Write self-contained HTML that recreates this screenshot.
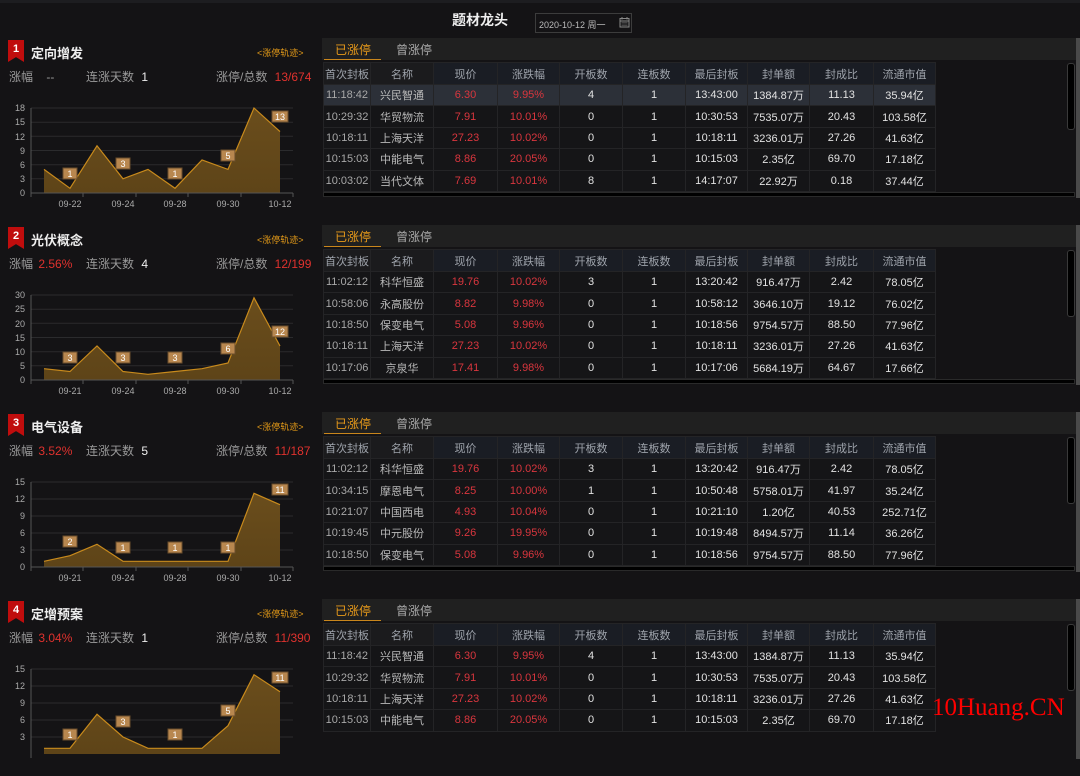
<!DOCTYPE html>
<html><head><meta charset="utf-8"><style>
*{margin:0;padding:0;box-sizing:border-box}
body{width:1080px;height:730px;overflow:hidden;background:#141315;font-family:"Liberation Sans","Noto Sans CJK SC",sans-serif;position:relative;color:#ddd}
.abs{position:absolute}
.sec{position:absolute;left:0;width:1080px;height:187px}
.badge{position:absolute;left:8px;top:40px;width:16px;height:22px;background:#c00d0d;clip-path:polygon(0 0,100% 0,100% 100%,50% 78%,0 100%);color:#fff;font-size:11px;font-weight:bold;text-align:center;line-height:19px}
.ttl{position:absolute;left:31px;top:43px;font-size:13px;color:#eee;font-weight:bold}
.trk{position:absolute;left:257px;top:46px;font-size:9px;color:#e39a18}
.st{position:absolute;top:68px;font-size:12px;color:#9a9a9a;white-space:nowrap}
.red{color:#e0322e}.wh{color:#eee}
.tabbar{position:absolute;left:322px;top:38px;width:754px;height:22px;background:#202020}
.tab1{position:absolute;left:335px;top:41px;font-size:12px;color:#e89a1a}
.tab2{position:absolute;left:396px;top:41px;font-size:12px;color:#aaa}
.uline{position:absolute;left:324px;top:59px;width:57px;height:1px;background:#c9861c}
table{position:absolute;left:323px;top:62px;border-collapse:collapse;font-size:11px;table-layout:fixed}
td{border:1px solid #242426;text-align:center;height:21.4px;padding:0;white-space:nowrap;color:#e2e2e2;background:#151517}
tr.h td{height:22px;background:#1a1d24;color:#9ea3ab}
tr.h td.a{background:#1b1b1d}
td.t{color:#a8a8a8}td.n{color:#b9b9b9}td.r{color:#d9363e}
tr.hl td{background:#2c3038}
.hs{position:absolute;left:323px;top:192px;width:752px;height:5px;background:#000;border:1px solid #2a2a2a}
.vs{position:absolute;left:1067px;top:63px;width:8px;height:67px;background:#000;border:1px solid #3a3a3a;border-radius:3px}
.edge{position:absolute;left:1076px;top:38px;width:4px;height:160px;background:#4a4a4a}
svg.ch{position:absolute;left:0;top:0;overflow:visible}
</style></head><body>
<div class="abs" style="left:0;top:0;width:1080px;height:3px;background:#1d1d20"></div>
<div class="abs" style="left:452px;top:10px;font-size:14px;font-weight:bold;color:#eee">题材龙头</div>
<div class="abs" style="left:535px;top:13px;width:97px;height:20px;border:1px solid #3c3c3c;font-size:9px;color:#bbb;padding:4px 0 0 3px">2020-10-12 周一
<svg class="abs" style="left:83px;top:3px" width="11" height="11" viewBox="0 0 11 11"><rect x="1" y="1.5" width="9" height="8.5" fill="none" stroke="#888"/><line x1="1" y1="4" x2="10" y2="4" stroke="#888"/><line x1="3" y1="0" x2="3" y2="2.5" stroke="#888"/><line x1="8" y1="0" x2="8" y2="2.5" stroke="#888"/><path d="M2.5 5.5h6M2.5 7h6M2.5 8.5h6" stroke="#777" stroke-width=".6"/></svg></div>

<!-- SECTION 1 -->
<div class="sec" style="top:0">
<div class="badge">1</div><div class="ttl">定向增发</div><div class="trk">&lt;涨停轨迹&gt;</div>
<div class="st" style="left:9px">涨幅 <span style="margin-left:10px">--</span></div>
<div class="st" style="left:86px">连涨天数 <span class="wh" style="margin-left:4px">1</span></div>
<div class="st" style="left:216px">涨停/总数 <span class="red" style="margin-left:4px">13/674</span></div>
<svg class="ch" width="320" height="215">
<defs><linearGradient id="g" x1="0" y1="0" x2="0" y2="1"><stop offset="0" stop-color="#6a4d1c"/><stop offset="1" stop-color="#5e4418"/></linearGradient></defs>
<g stroke="#2b2b2d"><line x1="31" y1="108" x2="293" y2="108"/><line x1="31" y1="122.2" x2="293" y2="122.2"/><line x1="31" y1="136.3" x2="293" y2="136.3"/><line x1="31" y1="150.5" x2="293" y2="150.5"/><line x1="31" y1="164.7" x2="293" y2="164.7"/><line x1="31" y1="178.8" x2="293" y2="178.8"/></g>
<polygon fill="url(#g)" points="44,193 44,169.4 70,188.3 97,145.8 123,178.8 148,169.4 175,188.3 202,159.9 228,169.4 254,108 280,131.6 280,193"/>
<polyline fill="none" stroke="#c88a1c" stroke-width="1.2" points="44,169.4 70,188.3 97,145.8 123,178.8 148,169.4 175,188.3 202,159.9 228,169.4 254,108 280,131.6"/>
<g stroke="#555"><line x1="31" y1="193" x2="293" y2="193"/><line x1="31" y1="108" x2="31" y2="197"/><line x1="83" y1="193" x2="83" y2="197"/><line x1="136" y1="193" x2="136" y2="197"/><line x1="188" y1="193" x2="188" y2="197"/><line x1="241" y1="193" x2="241" y2="197"/><line x1="293" y1="193" x2="293" y2="197"/></g>
<g font-size="9" fill="#aaa" text-anchor="end"><text x="25" y="196">0</text><text x="25" y="182">3</text><text x="25" y="168">6</text><text x="25" y="154">9</text><text x="25" y="140">12</text><text x="25" y="125">15</text><text x="25" y="111">18</text></g>
<g font-size="9" fill="#aaa" text-anchor="middle"><text x="70" y="207">09-22</text><text x="123" y="207">09-24</text><text x="175" y="207">09-28</text><text x="228" y="207">09-30</text><text x="280" y="207">10-12</text></g>
<g fill="#b8874f" stroke="#6a4e2c"><rect x="63" y="168" width="14" height="11"/><rect x="116" y="158" width="14" height="11"/><rect x="168" y="168" width="14" height="11"/><rect x="221" y="150" width="14" height="11"/><rect x="272" y="111" width="16" height="11"/></g>
<g font-size="9" fill="#fff" text-anchor="middle"><text x="70" y="177">1</text><text x="123" y="167">3</text><text x="175" y="177">1</text><text x="228" y="159">5</text><text x="280" y="120">13</text></g>
</svg>
<div class="tabbar"></div><div class="tab1">已涨停</div><div class="tab2">曾涨停</div><div class="uline"></div>
<table><colgroup><col style="width:47px"><col style="width:63px"><col style="width:64px"><col style="width:62px"><col style="width:63px"><col style="width:63px"><col style="width:62px"><col style="width:62px"><col style="width:64px"><col style="width:62px"></colgroup>
<tr class="h"><td class="a">首次封板</td><td class="a">名称</td><td>现价</td><td>涨跌幅</td><td>开板数</td><td>连板数</td><td>最后封板</td><td>封单额</td><td>封成比</td><td>流通市值</td></tr>
<tr class="hl"><td class="t">11:18:42</td><td class="n">兴民智通</td><td class="r">6.30</td><td class="r">9.95%</td><td>4</td><td>1</td><td>13:43:00</td><td>1384.87万</td><td>11.13</td><td>35.94亿</td></tr>
<tr><td class="t">10:29:32</td><td class="n">华贸物流</td><td class="r">7.91</td><td class="r">10.01%</td><td>0</td><td>1</td><td>10:30:53</td><td>7535.07万</td><td>20.43</td><td>103.58亿</td></tr>
<tr><td class="t">10:18:11</td><td class="n">上海天洋</td><td class="r">27.23</td><td class="r">10.02%</td><td>0</td><td>1</td><td>10:18:11</td><td>3236.01万</td><td>27.26</td><td>41.63亿</td></tr>
<tr><td class="t">10:15:03</td><td class="n">中能电气</td><td class="r">8.86</td><td class="r">20.05%</td><td>0</td><td>1</td><td>10:15:03</td><td>2.35亿</td><td>69.70</td><td>17.18亿</td></tr>
<tr><td class="t">10:03:02</td><td class="n">当代文体</td><td class="r">7.69</td><td class="r">10.01%</td><td>8</td><td>1</td><td>14:17:07</td><td>22.92万</td><td>0.18</td><td>37.44亿</td></tr>
</table>
<div class="hs"></div><div class="vs"></div><div class="edge"></div>
</div>

<!-- SECTION 2 -->
<div class="sec" style="top:187px">
<div class="badge">2</div><div class="ttl">光伏概念</div><div class="trk">&lt;涨停轨迹&gt;</div>
<div class="st" style="left:9px">涨幅 <span class="red" style="margin-left:2px">2.56%</span></div>
<div class="st" style="left:86px">连涨天数 <span class="wh" style="margin-left:4px">4</span></div>
<div class="st" style="left:216px">涨停/总数 <span class="red" style="margin-left:4px">12/199</span></div>
<svg class="ch" width="320" height="215">
<g stroke="#2b2b2d"><line x1="31" y1="108" x2="293" y2="108"/><line x1="31" y1="122.2" x2="293" y2="122.2"/><line x1="31" y1="136.3" x2="293" y2="136.3"/><line x1="31" y1="150.5" x2="293" y2="150.5"/><line x1="31" y1="164.7" x2="293" y2="164.7"/><line x1="31" y1="178.8" x2="293" y2="178.8"/></g>
<polygon fill="url(#g)" points="44,193 44,181.7 70,184.5 97,159 123,184.5 148,187.3 175,184.5 202,181.7 228,176 254,110.8 280,159 280,193"/>
<polyline fill="none" stroke="#c88a1c" stroke-width="1.2" points="44,181.7 70,184.5 97,159 123,184.5 148,187.3 175,184.5 202,181.7 228,176 254,110.8 280,159"/>
<g stroke="#555"><line x1="31" y1="193" x2="293" y2="193"/><line x1="31" y1="108" x2="31" y2="197"/><line x1="83" y1="193" x2="83" y2="197"/><line x1="136" y1="193" x2="136" y2="197"/><line x1="188" y1="193" x2="188" y2="197"/><line x1="241" y1="193" x2="241" y2="197"/><line x1="293" y1="193" x2="293" y2="197"/></g>
<g font-size="9" fill="#aaa" text-anchor="end"><text x="25" y="196">0</text><text x="25" y="182">5</text><text x="25" y="168">10</text><text x="25" y="154">15</text><text x="25" y="140">20</text><text x="25" y="125">25</text><text x="25" y="111">30</text></g>
<g font-size="9" fill="#aaa" text-anchor="middle"><text x="70" y="207">09-21</text><text x="123" y="207">09-24</text><text x="175" y="207">09-28</text><text x="228" y="207">09-30</text><text x="280" y="207">10-12</text></g>
<g fill="#b8874f" stroke="#6a4e2c"><rect x="63" y="165" width="14" height="11"/><rect x="116" y="165" width="14" height="11"/><rect x="168" y="165" width="14" height="11"/><rect x="221" y="156" width="14" height="11"/><rect x="272" y="139" width="16" height="11"/></g>
<g font-size="9" fill="#fff" text-anchor="middle"><text x="70" y="174">3</text><text x="123" y="174">3</text><text x="175" y="174">3</text><text x="228" y="165">6</text><text x="280" y="148">12</text></g>
</svg>
<div class="tabbar"></div><div class="tab1">已涨停</div><div class="tab2">曾涨停</div><div class="uline"></div>
<table><colgroup><col style="width:47px"><col style="width:63px"><col style="width:64px"><col style="width:62px"><col style="width:63px"><col style="width:63px"><col style="width:62px"><col style="width:62px"><col style="width:64px"><col style="width:62px"></colgroup>
<tr class="h"><td class="a">首次封板</td><td class="a">名称</td><td>现价</td><td>涨跌幅</td><td>开板数</td><td>连板数</td><td>最后封板</td><td>封单额</td><td>封成比</td><td>流通市值</td></tr>
<tr><td class="t">11:02:12</td><td class="n">科华恒盛</td><td class="r">19.76</td><td class="r">10.02%</td><td>3</td><td>1</td><td>13:20:42</td><td>916.47万</td><td>2.42</td><td>78.05亿</td></tr>
<tr><td class="t">10:58:06</td><td class="n">永高股份</td><td class="r">8.82</td><td class="r">9.98%</td><td>0</td><td>1</td><td>10:58:12</td><td>3646.10万</td><td>19.12</td><td>76.02亿</td></tr>
<tr><td class="t">10:18:50</td><td class="n">保变电气</td><td class="r">5.08</td><td class="r">9.96%</td><td>0</td><td>1</td><td>10:18:56</td><td>9754.57万</td><td>88.50</td><td>77.96亿</td></tr>
<tr><td class="t">10:18:11</td><td class="n">上海天洋</td><td class="r">27.23</td><td class="r">10.02%</td><td>0</td><td>1</td><td>10:18:11</td><td>3236.01万</td><td>27.26</td><td>41.63亿</td></tr>
<tr><td class="t">10:17:06</td><td class="n">京泉华</td><td class="r">17.41</td><td class="r">9.98%</td><td>0</td><td>1</td><td>10:17:06</td><td>5684.19万</td><td>64.67</td><td>17.66亿</td></tr>
</table>
<div class="hs"></div><div class="vs"></div><div class="edge"></div>
</div>

<!-- SECTION 3 -->
<div class="sec" style="top:374px">
<div class="badge">3</div><div class="ttl">电气设备</div><div class="trk">&lt;涨停轨迹&gt;</div>
<div class="st" style="left:9px">涨幅 <span class="red" style="margin-left:2px">3.52%</span></div>
<div class="st" style="left:86px">连涨天数 <span class="wh" style="margin-left:4px">5</span></div>
<div class="st" style="left:216px">涨停/总数 <span class="red" style="margin-left:4px">11/187</span></div>
<svg class="ch" width="320" height="215">
<g stroke="#2b2b2d"><line x1="31" y1="108" x2="293" y2="108"/><line x1="31" y1="125" x2="293" y2="125"/><line x1="31" y1="142" x2="293" y2="142"/><line x1="31" y1="159" x2="293" y2="159"/><line x1="31" y1="176" x2="293" y2="176"/></g>
<polygon fill="url(#g)" points="44,193 44,187.3 70,181.7 97,170.3 123,187.3 148,187.3 175,187.3 202,187.3 228,187.3 254,119.3 280,130.7 280,193"/>
<polyline fill="none" stroke="#c88a1c" stroke-width="1.2" points="44,187.3 70,181.7 97,170.3 123,187.3 148,187.3 175,187.3 202,187.3 228,187.3 254,119.3 280,130.7"/>
<g stroke="#555"><line x1="31" y1="193" x2="293" y2="193"/><line x1="31" y1="108" x2="31" y2="197"/><line x1="83" y1="193" x2="83" y2="197"/><line x1="136" y1="193" x2="136" y2="197"/><line x1="188" y1="193" x2="188" y2="197"/><line x1="241" y1="193" x2="241" y2="197"/><line x1="293" y1="193" x2="293" y2="197"/></g>
<g font-size="9" fill="#aaa" text-anchor="end"><text x="25" y="196">0</text><text x="25" y="179">3</text><text x="25" y="162">6</text><text x="25" y="145">9</text><text x="25" y="128">12</text><text x="25" y="111">15</text></g>
<g font-size="9" fill="#aaa" text-anchor="middle"><text x="70" y="207">09-21</text><text x="123" y="207">09-24</text><text x="175" y="207">09-28</text><text x="228" y="207">09-30</text><text x="280" y="207">10-12</text></g>
<g fill="#b8874f" stroke="#6a4e2c"><rect x="63" y="162" width="14" height="11"/><rect x="116" y="168" width="14" height="11"/><rect x="168" y="168" width="14" height="11"/><rect x="221" y="168" width="14" height="11"/><rect x="272" y="110" width="16" height="11"/></g>
<g font-size="9" fill="#fff" text-anchor="middle"><text x="70" y="171">2</text><text x="123" y="177">1</text><text x="175" y="177">1</text><text x="228" y="177">1</text><text x="280" y="119">11</text></g>
</svg>
<div class="tabbar"></div><div class="tab1">已涨停</div><div class="tab2">曾涨停</div><div class="uline"></div>
<table><colgroup><col style="width:47px"><col style="width:63px"><col style="width:64px"><col style="width:62px"><col style="width:63px"><col style="width:63px"><col style="width:62px"><col style="width:62px"><col style="width:64px"><col style="width:62px"></colgroup>
<tr class="h"><td class="a">首次封板</td><td class="a">名称</td><td>现价</td><td>涨跌幅</td><td>开板数</td><td>连板数</td><td>最后封板</td><td>封单额</td><td>封成比</td><td>流通市值</td></tr>
<tr><td class="t">11:02:12</td><td class="n">科华恒盛</td><td class="r">19.76</td><td class="r">10.02%</td><td>3</td><td>1</td><td>13:20:42</td><td>916.47万</td><td>2.42</td><td>78.05亿</td></tr>
<tr><td class="t">10:34:15</td><td class="n">摩恩电气</td><td class="r">8.25</td><td class="r">10.00%</td><td>1</td><td>1</td><td>10:50:48</td><td>5758.01万</td><td>41.97</td><td>35.24亿</td></tr>
<tr><td class="t">10:21:07</td><td class="n">中国西电</td><td class="r">4.93</td><td class="r">10.04%</td><td>0</td><td>1</td><td>10:21:10</td><td>1.20亿</td><td>40.53</td><td>252.71亿</td></tr>
<tr><td class="t">10:19:45</td><td class="n">中元股份</td><td class="r">9.26</td><td class="r">19.95%</td><td>0</td><td>1</td><td>10:19:48</td><td>8494.57万</td><td>11.14</td><td>36.26亿</td></tr>
<tr><td class="t">10:18:50</td><td class="n">保变电气</td><td class="r">5.08</td><td class="r">9.96%</td><td>0</td><td>1</td><td>10:18:56</td><td>9754.57万</td><td>88.50</td><td>77.96亿</td></tr>
</table>
<div class="hs"></div><div class="vs"></div><div class="edge"></div>
</div>

<!-- SECTION 4 -->
<div class="sec" style="top:561px">
<div class="badge">4</div><div class="ttl">定增预案</div><div class="trk">&lt;涨停轨迹&gt;</div>
<div class="st" style="left:9px">涨幅 <span class="red" style="margin-left:2px">3.04%</span></div>
<div class="st" style="left:86px">连涨天数 <span class="wh" style="margin-left:4px">1</span></div>
<div class="st" style="left:216px">涨停/总数 <span class="red" style="margin-left:4px">11/390</span></div>
<svg class="ch" width="320" height="215">
<g stroke="#2b2b2d"><line x1="31" y1="108" x2="293" y2="108"/><line x1="31" y1="125" x2="293" y2="125"/><line x1="31" y1="142" x2="293" y2="142"/><line x1="31" y1="159" x2="293" y2="159"/><line x1="31" y1="176" x2="293" y2="176"/></g>
<polygon fill="url(#g)" points="44,193 44,187.3 70,187.3 97,153.3 123,176 148,187.3 175,187.3 202,187.3 228,164.7 254,113.7 280,130.7 280,193"/>
<polyline fill="none" stroke="#c88a1c" stroke-width="1.2" points="44,187.3 70,187.3 97,153.3 123,176 148,187.3 175,187.3 202,187.3 228,164.7 254,113.7 280,130.7"/>
<line x1="31" y1="108" x2="31" y2="197" stroke="#555"/>
<g font-size="9" fill="#aaa" text-anchor="end"><text x="25" y="179">3</text><text x="25" y="162">6</text><text x="25" y="145">9</text><text x="25" y="128">12</text><text x="25" y="111">15</text></g>
<g fill="#b8874f" stroke="#6a4e2c"><rect x="63" y="168" width="14" height="11"/><rect x="116" y="155" width="14" height="11"/><rect x="168" y="168" width="14" height="11"/><rect x="221" y="144" width="14" height="11"/><rect x="272" y="111" width="16" height="11"/></g>
<g font-size="9" fill="#fff" text-anchor="middle"><text x="70" y="177">1</text><text x="123" y="164">3</text><text x="175" y="177">1</text><text x="228" y="153">5</text><text x="280" y="120">11</text></g>
</svg>
<div class="tabbar"></div><div class="tab1">已涨停</div><div class="tab2">曾涨停</div><div class="uline"></div>
<table><colgroup><col style="width:47px"><col style="width:63px"><col style="width:64px"><col style="width:62px"><col style="width:63px"><col style="width:63px"><col style="width:62px"><col style="width:62px"><col style="width:64px"><col style="width:62px"></colgroup>
<tr class="h"><td class="a">首次封板</td><td class="a">名称</td><td>现价</td><td>涨跌幅</td><td>开板数</td><td>连板数</td><td>最后封板</td><td>封单额</td><td>封成比</td><td>流通市值</td></tr>
<tr><td class="t">11:18:42</td><td class="n">兴民智通</td><td class="r">6.30</td><td class="r">9.95%</td><td>4</td><td>1</td><td>13:43:00</td><td>1384.87万</td><td>11.13</td><td>35.94亿</td></tr>
<tr><td class="t">10:29:32</td><td class="n">华贸物流</td><td class="r">7.91</td><td class="r">10.01%</td><td>0</td><td>1</td><td>10:30:53</td><td>7535.07万</td><td>20.43</td><td>103.58亿</td></tr>
<tr><td class="t">10:18:11</td><td class="n">上海天洋</td><td class="r">27.23</td><td class="r">10.02%</td><td>0</td><td>1</td><td>10:18:11</td><td>3236.01万</td><td>27.26</td><td>41.63亿</td></tr>
<tr><td class="t">10:15:03</td><td class="n">中能电气</td><td class="r">8.86</td><td class="r">20.05%</td><td>0</td><td>1</td><td>10:15:03</td><td>2.35亿</td><td>69.70</td><td>17.18亿</td></tr>
</table>
<div class="vs"></div><div class="edge"></div>
</div>

<div class="abs" style="left:932px;top:694px;font-family:'Liberation Serif',serif;font-size:25px;color:#f00">10Huang.CN</div>
</body></html>
